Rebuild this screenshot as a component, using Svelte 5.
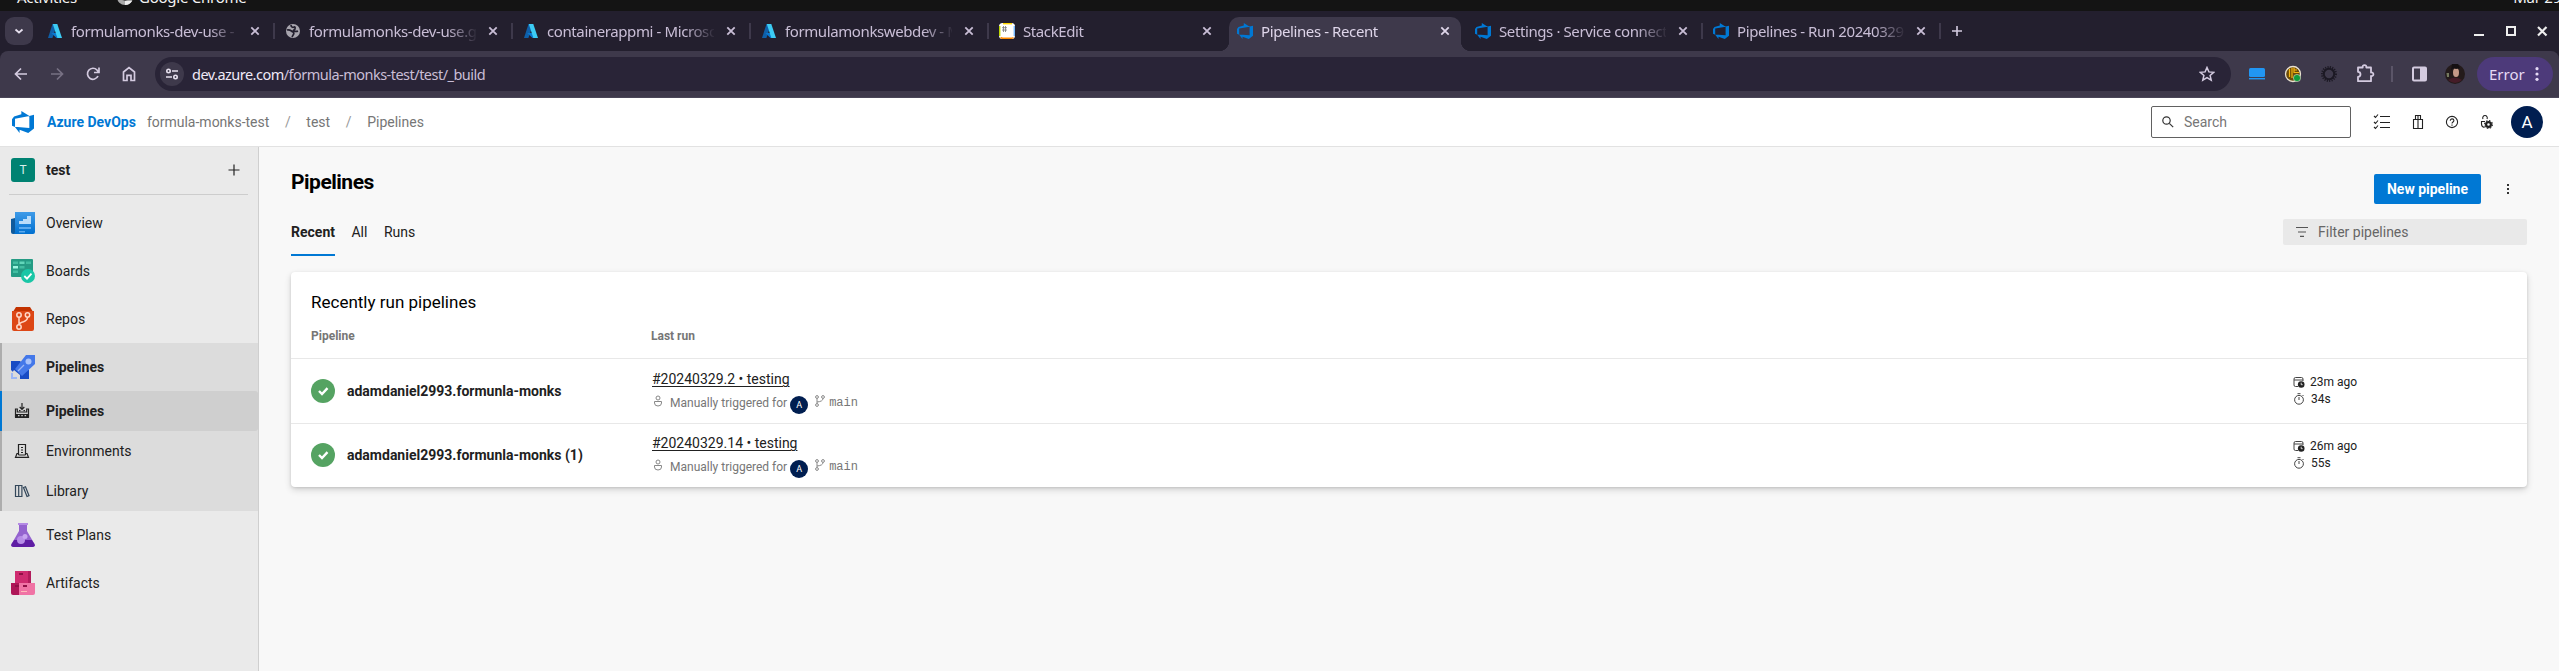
<script>
  const tabs = [
    { icon: 'azure', title: 'formulamonks-dev-use - Micro' },
    { icon: 'globe', title: 'formulamonks-dev-use.git' },
    { icon: 'azure', title: 'containerappmi - Microsoft' },
    { icon: 'azure', title: 'formulamonkswebdev - Mic' },
    { icon: 'stack', title: 'StackEdit' },
    { icon: 'devops', title: 'Pipelines - Recent', active: true },
    { icon: 'devops', title: 'Settings · Service connection' },
    { icon: 'devops', title: 'Pipelines - Run 20240329.2' }
  ];
  const runs = [
    { name: 'adamdaniel2993.formunla-monks', run: '#20240329.2 • testing', ago: '23m ago', time: '34s' },
    { name: 'adamdaniel2993.formunla-monks (1)', run: '#20240329.14 • testing', ago: '26m ago', time: '55s' }
  ];
  const devops = 'M16 2.800v10l-4.200 3.200-6.300-2.300V16L2 11.500l10.600.8V3.600L16 2.800ZM12.700 3.700 6.800 0v2.400L1.500 4 0 6v4.700l2.200 1V5.600l10.500-1.900Z';
</script>

{#snippet favicon(kind)}
  {#if kind === 'azure'}
    <svg class="fav" viewBox="0 0 16 16"><path d="M5.500 1h4.700L5.400 15H1Z" fill="#0f5fa8" /><path d="M4.300 10h7l2 5H9.500Z" fill="#0a78d0" /><path d="M5.800 1h4.500L15 15h-4.600Z" fill="#3ccbf4" /></svg>
  {:else if kind === 'globe'}
    <svg class="fav" viewBox="0 0 16 16"><circle cx="8" cy="8" r="7" fill="#a8a5ae" /><path d="M2 7c3-1 4 1 6 2s0 3-1 5M6 2c0 2 2 3 3 2s2 2 0 3 2 2 4 1" fill="none" stroke="#231f2e" stroke-width="1.700" /></svg>
  {:else if kind === 'stack'}
    <svg class="fav" viewBox="0 0 16 16"><rect width="16" height="16" rx="3.500" fill="#fff" /><path d="M4 .7h9" stroke="#ffd700" stroke-width="1.400" /><path d="M.7 3v10" stroke="#bbd500" stroke-width="1.400" /><path d="M15.300 3v10" stroke="#75b7fd" stroke-width="1.400" /><path d="M1.500 14.500Q3 15.300 4 15.300h8q1.500 0 2.500-.8" fill="none" stroke="#ff8a00" stroke-width="1.500" /><path d="M4.500 3v6M6.500 3v6M3 4.700h5M3 7h5" stroke="#777" stroke-width=".8" /></svg>
  {:else}
    <svg class="fav" viewBox="0 0 16 16"><path d={devops} fill="#0078d4" /></svg>
  {/if}
{/snippet}

<div class="screen">
  <div class="topbar"><span class="act">Activities</span><svg class="chrome" viewBox="0 0 16 16"><circle cx="8" cy="8" r="8" fill="#aaa" /><circle cx="8" cy="8" r="3.500" fill="#eee" stroke="#444" /><path d="M8 12h7a8 8 0 0 1-7 4Z" fill="#eee" /></svg><span>Google Chrome</span><span class="date">Mar 29</span></div>

  <div class="browser">
  <div class="tabstrip">
    <div class="chev"><svg viewBox="0 0 10 10" width="10" height="10"><path d="m1.500 3.500 3.500 3 3.500-3" fill="none" stroke="#e6e0ee" stroke-width="1.800" /></svg></div>
    {#each tabs as t, i}
      <div class="tab" class:active={t.active}>
        {@render favicon(t.icon)}
        <span class="title">{t.title}</span>
        <svg class="close" viewBox="0 0 10 10"><path d="m1.300 1.300 7.400 7.400m0-7.400-7.400 7.400" stroke="currentColor" stroke-width="1.800" /></svg>
      </div>
      <i class="sep" class:hidden={i === 4 || i === 5}></i>
    {/each}
    <svg class="newtab" viewBox="0 0 12 12"><path d="M6 1v10M1 6h10" stroke="#d4cbe0" stroke-width="1.600" /></svg>
    <svg class="wm" viewBox="0 0 76 16"><path d="M1 12h10" stroke="#eee" stroke-width="2" /><path d="M34 4h8v8h-8z" fill="none" stroke="#eee" stroke-width="2" /><path d="m65 4 8.500 8.500M73.500 4 65 12.500" stroke="#eee" stroke-width="2.200" /></svg>
  </div>

  <div class="toolbar">
    <svg class="nav" viewBox="0 0 16 16"><path d="M14 8H3m5-5.500L2.500 8 8 13.500" /></svg>
    <svg class="nav dim" viewBox="0 0 16 16"><path d="M2 8h11M8 2.500 13.500 8 8 13.500" /></svg>
    <svg class="nav" viewBox="0 0 16 16"><path d="M13 10A5.500 5.500 0 1 1 12 4l1.500 2M14 1.500v5H9" /></svg>
    <svg class="nav" viewBox="0 0 16 16"><path d="M2.500 14.500V6L8 1.700 13.500 6v8.500H10V9.300H6v5.200Z" /></svg>
    <div class="omni">
      <div class="site"><svg viewBox="0 0 14 14" width="14" height="14" fill="none" stroke="#e6e0ee" stroke-width="1.600"><circle cx="3.500" cy="4" r="1.700" /><path d="M7 4h6M1 10h6" /><circle cx="10.500" cy="10" r="1.700" /></svg></div>
      <span class="url"><b>dev.azure.com</b>/formula-monks-test/test/_build</span>
      <svg class="star" viewBox="0 0 16 16"><path d="m8 1.500 1.900 4.400 4.800.4-3.600 3.200 1.100 4.700L8 11.700l-4.200 2.500 1.100-4.700L1.300 6.300l4.800-.4Z" fill="none" stroke="#d4cbe0" stroke-width="1.500" /></svg>
    </div>
    <svg class="ext" viewBox="0 0 246 34">
      <rect x="18" y="11" width="16" height="9" rx="1.500" fill="#2196f3" /><path d="M18 21.700h16" stroke="#2196f3" stroke-width="1.500" />
      <circle cx="62" cy="17" r="7.500" fill="#6b4b08" stroke="#e8e0d0" stroke-width="1.300" /><path d="M58.500 12v8M61 11v10M63 10.500v5h5M63 13h3" fill="none" stroke="#f5b614" stroke-width="1.200" /><circle cx="66" cy="21" r="3.600" fill="#109c3c" stroke="#e8e0d0" stroke-width=".6" />
      <circle cx="98" cy="17" r="5.200" fill="none" stroke="#1c1924" stroke-width="2" /><circle cx="98" cy="17" r="7" fill="none" stroke="#1c1924" stroke-width="2" stroke-dasharray="1.200 1.200" />
      <path d="M127 10.500h4.700c-.7-3.200 4.300-3.200 3.600 0h4.700v5c3.200-.7 3.200 4.200 0 3.500v5.200h-13v-4.400c3.300 0 3.300-5 0-5Z" fill="none" stroke="#d4cbe0" stroke-width="1.800" stroke-linejoin="round" />
      <path d="M161 9v16" stroke="#5b5568" stroke-width="2" />
      <rect x="182" y="10.500" width="13" height="13" rx="1" fill="none" stroke="#d4cbe0" stroke-width="2" /><path d="M189 10h6v14h-6z" fill="#d4cbe0" />
      <circle cx="224" cy="17" r="10" fill="#241b1b" /><ellipse cx="225" cy="15.500" rx="3" ry="4.500" fill="#c59a88" /><path d="M217 23q7-5 14 0-7 6-14 0" fill="#451c28" /><path d="M220 14q1-4 5-2l4-1-2-4h-6z" fill="#151012" /><path d="M215.500 16h2.500v4h-2z" fill="#74795f" />
    </svg>
    <div class="error">Error<svg viewBox="0 0 4 16" width="4" height="16"><circle cx="2" cy="2.700" r="1.600" /><circle cx="2" cy="8" r="1.600" /><circle cx="2" cy="13.300" r="1.600" /></svg></div>
  </div>
  </div>

  <header>
    <svg class="logo" viewBox="0 0 16 16"><path d={devops} fill="#0078d4" /></svg>
    <strong>Azure DevOps</strong><span class="org">formula-monks-test</span><span class="sl">/</span><span>test</span><span class="sl">/</span><span>Pipelines</span>
    <div class="search"><svg viewBox="0 0 14 14" width="14" height="14"><circle cx="5.500" cy="5.500" r="3.700" fill="none" stroke="#333" stroke-width="1.200" /><path d="m8.300 8.300 3.900 3.900" stroke="#333" stroke-width="1.200" /></svg>Search</div>
    <svg class="hicons" viewBox="0 0 130 32" fill="none" stroke="#222" stroke-width="1.100">
      <path d="M7 10.500h10M7 16.500h10M7 21.500h10M1 10l1.500 1.500L5 8.500M1 16 2.500 17.500 5 14.500M1 21l1.500 1.500L5 19.500" />
      <path d="M40.500 13.500h9v9h-9zM42.500 13.500v-4h5v4M45 9.500v13" />
      <circle cx="79" cy="16" r="5.600" /><path d="M77.300 14.700c0-2.500 3.600-2.300 3.600-.1 0 1.400-1.900 1.400-1.900 3m0 1v1.100" />
      <path d="M110 13a2.300 2.300 0 1 1 4 0M112 15.500h-3.500V18q0 3 3 3.500" /><circle cx="115.500" cy="18.500" r="2.400" stroke-width="2.200" /><circle cx="115.500" cy="18.500" r="3.900" stroke-dasharray="1.600 1.460" />
    </svg>
    <div class="avatar">A</div>
  </header>

  <div class="body">
    <nav>
      <div class="proj"><i>T</i><b>test</b><svg viewBox="0 0 12 12" width="12" height="12"><path d="M6 .5v11M.5 6h11" stroke="#222" stroke-width="1.200" /></svg></div>
      <div class="rule"></div>
      <div class="item"><svg viewBox="0 0 24 24"><path d="M0 8 4 7v16H2q-2 0-2-2Z" fill="#0f5a9c" /><path d="M4 1h20v20q0 2-2 2H2q2 0 2-2Z" fill="url(#ov)" /><path d="M8 10h4V8h4V5h4v8H8Z" fill="#b9dcfa" /><path d="M8 16h12v2H8zM8 20h6v1.500H8z" fill="#5aa9ee" /><defs><linearGradient id="ov" x2="0" y2="1"><stop stop-color="#3f9be8" /><stop offset="1" stop-color="#0070d0" /></linearGradient></defs></svg>Overview</div>
      <div class="item"><svg viewBox="0 0 24 24"><rect width="22" height="18" rx="1" fill="#259b84" /><path d="M2 2.500h5V5H2zM15 2.500h5V5h-5zM8.500 7h5v2.500h-5zM2 11.500h5V14H2z" fill="#42bda1" /><path d="M8.500 2.500h5V5h-5z" fill="#62d6ba" /><path d="M2 7h5v2.500H2z" fill="#9cf5e0" /><circle cx="17" cy="17" r="7" fill="#19c6a6" /><path d="m13.300 17 2.700 2.600 4.500-5" fill="none" stroke="#fff" stroke-width="1.800" /></svg>Boards</div>
      <div class="item"><svg viewBox="0 0 24 24"><path d="M5 0h14l2.500 4H2.500Z" fill="#c23200" /><path d="M1 4h22v18q0 2-2 2H3q-2 0-2-2Z" fill="#dd4716" /><g fill="none" stroke="#ffd9c9" stroke-width="1.500"><circle cx="8" cy="8" r="2.200" /><circle cx="16.500" cy="8" r="2.200" /><circle cx="8" cy="20" r="2.200" /><path d="M8 10.200v7.600M16.500 10.200q0 3-4 4.500Q8 16 8 18" /></g></svg>Repos</div>
      <div class="group">
        <div class="item bold"><svg viewBox="0 0 24 24"><path d="M0 6h9l9 9v9h-9L0 15Z" fill="#184bc4" /><path d="M15 0h9v9L11 21 4 14Z" fill="#4478e9" /><circle cx="17.500" cy="6.500" r="3" fill="#a9c3fb" /><path d="m7 16 6-6" stroke="#9cb7f5" stroke-width="1.300" /><path d="m3 15 6 5v4H6L1 18Z" fill="#dcdcdc" /><path d="M0 18h2v4h4v2H0Z" fill="#9cb7f5" /></svg>Pipelines</div>
        <div class="sub sel"><svg viewBox="0 0 16 16" fill="none" stroke="#222" stroke-width="1.200"><path d="M8 0v6M5.700 4 8 6.300 10.300 4M1.500 14.500V6h1.800v3h9.400V6h1.800v8.500" /><path d="M1 11h14v4H1z" fill="#222" stroke="none" /><path d="M4 12.700h1.500M7.300 12.700h1.500M10.600 12.700h1.500" stroke="#cfcfcf" /><path d="M5 7.700h1.500M9.500 7.700H11" /></svg>Pipelines</div>
        <div class="sub"><svg viewBox="0 0 16 16" fill="none" stroke="#222" stroke-width="1.200"><path d="M4.500 12V1.500h7V12M7 4.500h2M7 7h2M7 9.500h2M4.500 10.500H3L1.500 14.300h13L13 10.500h-1.500M4.500 12h7" /></svg>Environments</div>
        <div class="sub"><svg viewBox="0 0 16 16" fill="none" stroke="#33475a" stroke-width="1.200"><path d="M1.500 2.500h3.200v11H1.500zM4.700 2.500h3.200v11H4.700zM9.500 4.500l2-.8 3.500 9-2 .8Z" /></svg>Library</div>
      </div>
      <div class="item"><svg viewBox="0 0 24 24"><path d="M8 2h8v6l7.500 13q1 3-2 3h-19q-3 0-2-3L8 8Z" fill="#9463cf" /><path d="M3.200 17h17.600l2.700 4q1 3-2 3h-19q-3 0-2-3Z" fill="#5f1da4" /><path d="M7 0h10v2H7z" fill="#b48ae4" /><circle cx="10" cy="17" r="4" fill="#b78de8" /><circle cx="14" cy="13.500" r="2.500" fill="#c7a5f0" /></svg>Test Plans</div>
      <div class="item"><svg viewBox="0 0 24 24"><path d="M4 0h16v12H4z" fill="#cf2c70" /><path d="M17 0h3v12h-3z" fill="#b21c5c" /><path d="M0 12h8v12H2q-2 0-2-2Z" fill="#ae1657" /><path d="M8 12h16v10q0 2-2 2H8Z" fill="#f073a5" /><path d="M8 2h4v2H8zM12 14h4v2h-4zM4 14h4v2H4z" fill="#8f1046" /><path d="M10 20h6v1h-6z" fill="#fbb" /></svg>Artifacts</div>
    </nav>

    <main>
      <div class="head">
        <h1>Pipelines</h1>
        <button>New pipeline</button>
        <svg class="more" viewBox="0 0 4 12"><path d="M1 1h2v2H1zM1 5h2v2H1zM1 9h2v2H1z" fill="#333" /></svg>
      </div>
      <div class="pivots">
        <b>Recent</b><span>All</span><span>Runs</span>
        <div class="filter"><svg viewBox="0 0 14 12" width="14" height="12"><path d="M1 1.500h12M3 6h8M5 10.300h4" stroke="#555" stroke-width="1.200" /></svg>Filter pipelines</div>
      </div>
      <section>
        <h2>Recently run pipelines</h2>
        <div class="row th"><span>Pipeline</span><span>Last run</span></div>
        {#each runs as r}
          <div class="row">
            <div class="name"><svg viewBox="0 0 24 24" width="24" height="24"><circle cx="12" cy="12" r="12" fill="#55a362" /><path d="m8 12 3 3 5.500-5.800" fill="none" stroke="#fff" stroke-width="2.400" /></svg>{r.name}</div>
            <div class="last">
              <u>{r.run}</u>
              <div class="trig">
                <svg class="person" viewBox="0 0 10 12"><circle cx="5" cy="3" r="2" /><path d="M1.500 6.500h7V8q0 3-3.500 3T1.500 8Z" /></svg>
                Manually triggered for<em>A</em>
                <svg class="branch" viewBox="0 0 10 12"><circle cx="2" cy="2" r="1.400" /><circle cx="8" cy="2" r="1.400" /><circle cx="2" cy="10" r="1.400" /><path d="M2 3.400v5.200M8 3.400Q8 6.500 2 7" /></svg><code>main</code>
              </div>
            </div>
            <div class="when">
              <div><svg viewBox="0 0 12 12"><path d="M10 5V3q0-1.500-1.500-1.500h-6Q1 1.500 1 3v6q0 1.500 1.500 1.500H5M1 4h9" /><circle cx="8.200" cy="8.500" r="3.300" fill="#222" stroke="none" /><path d="M8.200 6.700v2h1.500" stroke="#fff" stroke-width=".8" /></svg>{r.ago}</div>
              <div><svg viewBox="0 0 12 12"><circle cx="6" cy="6.800" r="4.400" /><path d="M4.500.7h3M6 4v3M9.500 2l1 1" /></svg>{r.time}</div>
            </div>
          </div>
        {/each}
      </section>
    </main>
  </div>
</div>

<style>
  :global(body) { margin: 0; overflow: hidden; }
  .screen { width: 2559px; height: 671px; overflow: hidden; display: flex; flex-direction: column; font-family: Roboto, sans-serif; font-size: 14px; color: #212121; background: #f8f8f8; }
  svg { flex: none; display: block; }
  .topbar, .tabstrip, .toolbar { font-family: "Noto Sans", sans-serif; flex: none; box-sizing: border-box; }
  .topbar { height: 11px; background: #141414; color: #f2f2f2; font-size: 15px; line-height: 20px; overflow: hidden; display: flex; align-items: flex-end; padding: 0 0 4px 17px; letter-spacing: -.25px; }
  .topbar span { white-space: nowrap; }
  .act { width: 100px; }
  .chrome { width: 16px; height: 16px; margin: 0 6px 2px 0; }
  .date { margin: 0 -2px 0 auto; }
  .browser { flex: none; background: #231f2e; }
  .tabstrip { height: 40px; display: flex; align-items: center; padding: 0 14px 0 5px; }
  .chev { width: 28px; height: 28px; border-radius: 9px; background: #3e394b; display: flex; align-items: center; justify-content: center; margin-right: 6px; }
  .tab { flex: none; box-sizing: border-box; width: 232px; height: 34px; align-self: flex-end; padding: 0 11px 6px 8px; display: flex; align-items: center; color: #c9bed6; position: relative; }
  .active { background: #3e394b; border-radius: 10px 10px 0 0; color: #dfd6ea; }
  .active::before, .active::after { content: ''; position: absolute; bottom: 0; width: 10px; height: 10px; }
  .active::before { left: -10px; background: radial-gradient(circle at 0 0, transparent 10px, #3e394b 10.500px); }
  .active::after { right: -10px; background: radial-gradient(circle at 100% 0, transparent 10px, #3e394b 10.500px); }
  .fav { width: 16px; height: 16px; margin-right: 8px; }
  .title { width: 167px; flex: none; font-size: 15px; line-height: 22px; letter-spacing: -.4px; white-space: nowrap; overflow: hidden; mask-image: linear-gradient(90deg, #000 138px, transparent 169px); }
  .close { width: 10px; height: 10px; margin-left: 12px; }
  .sep { flex: none; width: 2px; height: 16px; margin: 0 2px; background: #3e394b; }
  .hidden { visibility: hidden; }
  .newtab { width: 12px; height: 12px; margin-left: 8px; }
  .wm { width: 76px; height: 16px; margin-left: auto; margin-right: -4px; }
  .toolbar { height: 47px; background: #3e394b; border-bottom: 1px solid #4a4658; border-radius: 8px 8px 0 0; display: flex; align-items: center; padding: 0 6px 0 13px; }
  .nav { width: 16px; height: 16px; margin-right: 20px; fill: none; stroke: #d4cbe0; stroke-width: 1.700; }
  .dim { stroke: #777184; }
  .omni { box-sizing: border-box; width: 2076px; height: 34px; border-radius: 17px; background: #292437; display: flex; align-items: center; padding: 0 16px 0 5px; margin-left: -2px; }
  .site { width: 24px; height: 24px; border-radius: 50%; background: #3e394b; display: flex; align-items: center; justify-content: center; margin-right: 8px; }
  .url { font-size: 14.500px; line-height: 20px; letter-spacing: -.52px; color: #c9bed6; }
  .url b { font-weight: 400; color: #efe9f6; }
  .star { width: 16px; height: 16px; margin-left: auto; }
  .ext { width: 246px; height: 34px; margin-right: auto; }
  .error { box-sizing: border-box; width: 76px; height: 34px; border-radius: 17px; background: #4d3a7a; color: #e5daf5; font-size: 15px; display: flex; align-items: center; justify-content: space-between; padding: 0 14px 0 12px; }
  .error svg { fill: #e5daf5; }
  header { flex: none; box-sizing: border-box; height: 49px; border-bottom: 1px solid #e2e2e2; background: #fff; display: flex; align-items: center; padding: 0 16px 0 12px; color: #767676; }
  .logo { width: 22px; height: 22px; margin-right: 13px; }
  header strong { color: #0078d4; font-weight: 700; margin-right: 11px; }
  .sl { width: 37px; text-align: center; color: #999; }
  .search { box-sizing: border-box; width: 200px; height: 32px; border: 1px solid #616161; border-radius: 2px; display: flex; align-items: center; gap: 9px; padding-left: 9px; margin-left: auto; margin-right: 22px; }
  .hicons { width: 130px; height: 32px; margin-right: 8px; }
  .avatar { width: 32px; height: 32px; border-radius: 50%; background: #001e50; color: #fff; font-size: 17px; line-height: 33px; text-align: center; }
  .body { flex: 1; display: flex; min-height: 0; }
  nav { box-sizing: border-box; width: 259px; background: #eaeaea; border-right: 1px solid #cfcfcf; }
  .proj { display: flex; align-items: center; height: 46px; padding: 0 18px 0 11px; }
  .proj i { width: 24px; height: 24px; border-radius: 3px; background: #008272; color: #d9efec; font-style: normal; font-size: 12px; line-height: 24px; text-align: center; margin-right: 11px; }
  .proj b { flex: 1; }
  .rule { height: 1px; margin: 1px 10px 4px 9px; background: #cdcdcd; }
  .item { height: 48px; display: flex; align-items: center; gap: 11px; padding-left: 11px; line-height: 18px; }
  .item svg { width: 24px; height: 24px; }
  .group { background: #dcdcdc; box-shadow: inset 2px 0 #adadad; }
  .bold { font-weight: 700; }
  .sub { height: 40px; display: flex; align-items: center; gap: 16px; padding-left: 14px; line-height: 18px; }
  .sub svg { width: 16px; height: 16px; }
  .sel { font-weight: 700; background: #cfcfcf; box-shadow: inset 2px 0 #0078d4; border-radius: 0 3px 3px 0; }
  main { flex: 1; padding: 0 32px; }
  .head { height: 60px; display: flex; align-items: flex-start; }
  h1 { margin: 21px auto 0 0; font-size: 21px; line-height: 28px; font-weight: 700; letter-spacing: -.5px; color: #000; }
  button { width: 107px; height: 30px; margin-top: 27px; border: 0; border-radius: 2px; padding: 0; background: #0078d4; color: #fff; font: 700 14px Roboto, sans-serif; }
  .more { width: 4px; height: 12px; margin: 36px 17px 0 25px; }
  .pivots { height: 50px; display: flex; align-items: flex-start; line-height: 50px; gap: 16.500px; }
  .pivots b { height: 49px; box-shadow: inset 0 -2px #0078d4; }
  .filter { box-sizing: border-box; width: 244px; height: 26px; line-height: 26px; margin: 12px 0 0 auto; border-radius: 2px; background: #e9e9e9; color: #666; display: flex; align-items: center; gap: 9px; padding-left: 12px; }
  section { margin-top: 15px; background: #fff; border-radius: 4px; box-shadow: 0 3px 7px rgba(0,0,0,.14), 0 1px 3px rgba(0,0,0,.12); height: 215px; }
  h2 { margin: 0; padding: 19px 20px 1px; font-size: 17px; line-height: 22px; font-weight: 400; color: #000; }
  .row { box-sizing: border-box; display: grid; grid-template-columns: 340px 1642px 1fr; padding-left: 20px; align-items: center; }
  .row + .row { border-top: 1px solid #e8e8e8; height: 65px; }
  .row + .row:last-child { height: 64px; padding-bottom: 1px; }
  .row.th { height: 44px; font-size: 12px; font-weight: 700; color: #767676; }
  .name { display: flex; align-items: center; gap: 12px; font-weight: 700; line-height: 18px; }
  .last u { display: block; text-decoration: underline 1px; text-underline-offset: 1.500px; width: max-content; line-height: 20px; margin: 0 0 5px 1px; }
  .trig { display: flex; align-items: center; font-size: 12px; line-height: 18px; height: 18px; padding-bottom: 1px; color: #767676; }
  .trig svg { fill: none; stroke: #888; stroke-width: 1; width: 10px; height: 12px; }
  .person { margin: -4px 7px 0 2px; }
  .trig em { width: 18px; height: 18px; border-radius: 50%; background: #001e50; color: #fff; font-size: 9px; line-height: 19px; text-align: center; font-style: normal; margin: 4px 6px 0 3px; }
  .trig .branch { margin: -4px 4px 0 1px; }
  code { font: 12px "Liberation Mono", monospace; }
  .when { font-size: 12px; line-height: 17px; padding-bottom: 1px; }
  .when div { display: flex; align-items: center; gap: 5px; }
  .when div + div { gap: 6px; }
  .when svg { width: 12px; height: 12px; fill: none; stroke: #444; stroke-width: 1; }
</style>
